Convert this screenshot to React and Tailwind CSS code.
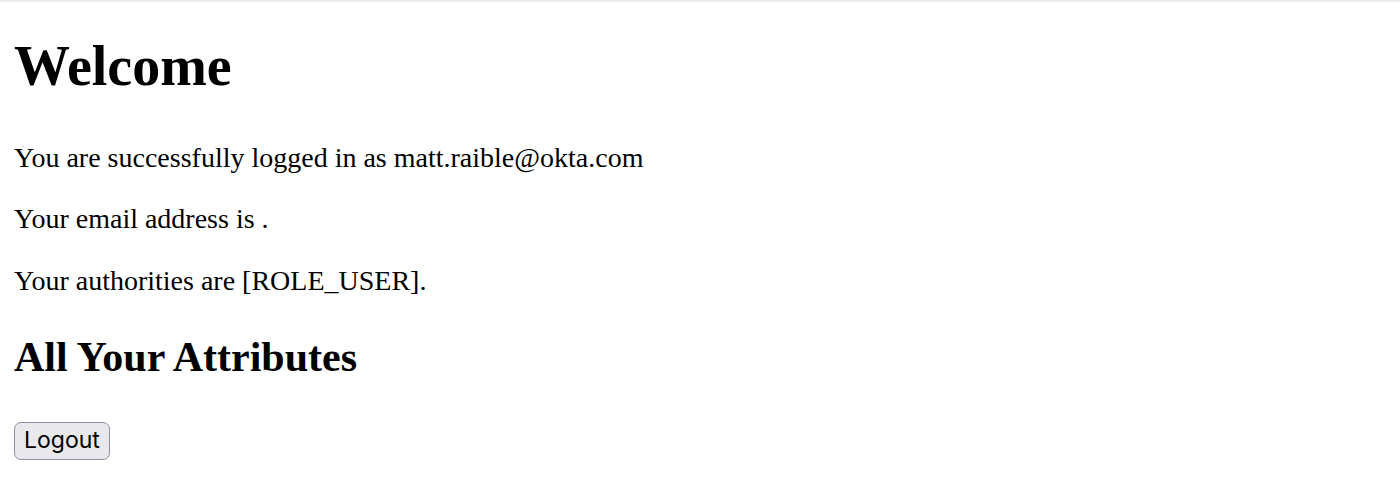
import React from 'react';

const App = () => {
  return (
    <div className="min-h-screen bg-white border-t-2 border-[#ededed] text-black font-['Liberation_Serif',serif]">
      <div className="px-[14px] pt-[32px] pb-[14px]">
        <h1 className="text-[56px] font-bold leading-[64px] mb-[43.5px]">Welcome</h1>
        <p className="text-[28px] leading-[32px] mb-[29.5px]">You are successfully logged in as matt.raible@okta.com</p>
        <p className="text-[28px] leading-[32px] mb-[29.5px]">Your email address is .</p>
        <p className="text-[28px] leading-[32px] mb-[36px]">Your authorities are [ROLE_USER].</p>
        <h2 className="text-[42px] font-bold leading-[48px] mb-[41px]">All Your Attributes</h2>
        <form>
          <button
            type="submit"
            className="w-[96px] h-[38px] flex items-center justify-center bg-[#e9e9ed] border-[1.75px] border-[#8f8f9d] rounded-[7px] text-[23px] leading-none font-['Inter',sans-serif] text-black"
          >
            Logout
          </button>
        </form>
      </div>
    </div>
  );
};

export default App;
